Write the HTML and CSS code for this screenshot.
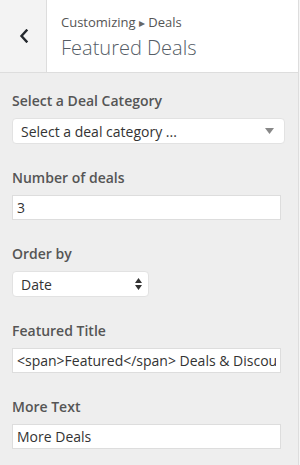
FILE: index.html
```html
<!DOCTYPE html>
<html lang="en">
<head>
  <meta charset="UTF-8" />
  <title>Customizing - Featured Deals</title>
  <link rel="stylesheet" href="styles.css">
</head>
<body>
  <div class="panel">
    <!-- Section header -->
    <div class="section-head">
      <button class="back-btn" type="button" aria-label="Back">
        <svg width="10" height="14" viewBox="0 0 10 14">
          <path d="M7.5 1.5 L2.5 7 L7.5 12.5" fill="none" stroke="#23282d" stroke-width="2.4" stroke-linecap="square"/>
        </svg>
      </button>
      <div class="head-title">
        <span class="crumb">Customizing <span class="crumb-arrow">&#9656;</span> Deals</span>
        <h1>Featured Deals</h1>
      </div>
    </div>

    <!-- Controls -->
    <div class="controls">
      <div class="control">
        <label for="deal-cat">Select a Deal Category</label>
        <div class="select-wrap wide">
          <select id="deal-cat" class="select">
            <option>Select a deal category ...</option>
          </select>
          <svg class="select-arrow" width="9" height="6" viewBox="0 0 9 6">
            <path d="M0 0 H9 L4.5 6 Z" fill="#888"/>
          </svg>
        </div>
      </div>

      <div class="control">
        <label for="deal-count">Number of deals</label>
        <input type="text" id="deal-count" value="3">
      </div>

      <div class="control">
        <label for="deal-order">Order by</label>
        <div class="select-wrap short">
          <select id="deal-order" class="select">
            <option>Date</option>
          </select>
          <svg class="select-arrow updown" width="7" height="12" viewBox="0 0 7 12">
            <path d="M0 5 L3.5 0 L7 5 Z M0 7 L3.5 12 L7 7 Z" fill="#333"/>
          </svg>
        </div>
      </div>

      <div class="control">
        <label for="deal-title">Featured Title</label>
        <input type="text" id="deal-title" value="<span>Featured</span> Deals &amp; Discounts">
      </div>

      <div class="control">
        <label for="deal-more">More Text</label>
        <input type="text" id="deal-more" value="More Deals">
      </div>
    </div>
  </div>
</body>
</html>
```

FILE: styles.css
```css
html, body {
  margin: 0;
  padding: 0;
  height: 100%;
}

body {
  background: #f5f5f5;
  font-family: "Open Sans", "Noto Sans", sans-serif;
  color: #555;
}

.panel {
  width: 298px;
  height: 100%;
  background: #eee;
  border-right: 1px solid #ddd;
  overflow: hidden;
}

.section-head {
  display: flex;
  height: 72px;
  background: #fff;
  border-bottom: 1px solid #ddd;
}

.back-btn {
  width: 47px;
  padding: 0 0 0 1px;
  border: none;
  border-right: 1px solid #ddd;
  background: #f3f3f3;
  display: flex;
  align-items: center;
  justify-content: center;
}

.head-title {
  padding: 12px 0 0 14px;
}

.crumb {
  display: block;
  font-size: 13px;
  line-height: 20px;
  color: #555;
}

.crumb-arrow {
  font-size: 12px;
  color: #666;
}

.head-title h1 {
  margin: 2px 0 0;
  font-size: 20px;
  font-weight: 300;
  line-height: 26px;
  color: #555d66;
}

.controls {
  padding: 17px 12px 0;
}

.control {
  margin-bottom: 23px;
}

.control label {
  display: block;
  font-size: 14px;
  font-weight: 600;
  line-height: 21px;
  margin-bottom: 7px;
  color: #555;
}

.control input[type="text"] {
  box-sizing: border-box;
  display: block;
  width: 269px;
  height: 25px;
  margin: 0;
  padding: 0 4px;
  border: 1px solid #ddd;
  background: #fff;
  font-family: "Open Sans", "Noto Sans", sans-serif;
  font-size: 14px;
  color: #333;
  outline: none;
}

.select-wrap {
  position: relative;
}

.select-wrap.wide {
  width: 273px;
}

.select-wrap.short {
  width: 137px;
}

.select {
  -webkit-appearance: none;
  appearance: none;
  box-sizing: border-box;
  display: block;
  width: 100%;
  height: 26px;
  margin: 0;
  padding: 0 8px;
  border: 1px solid #e2e2e2;
  border-radius: 4px;
  background: #fff;
  font-family: "Open Sans", "Noto Sans", sans-serif;
  font-size: 14px;
  color: #333;
  outline: none;
}

.select-arrow {
  position: absolute;
  right: 11px;
  top: 10px;
  pointer-events: none;
}

.select-arrow.updown {
  right: 7px;
  top: 7px;
}
```
